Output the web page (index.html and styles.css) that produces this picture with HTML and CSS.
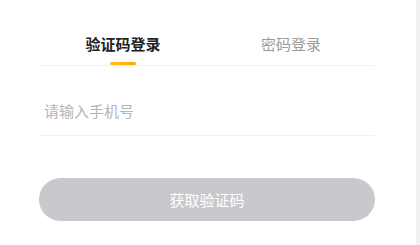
FILE: index.html
```html
<!DOCTYPE html>
<html lang="zh-CN">
<head>
<meta charset="utf-8">
<link rel="stylesheet" href="styles.css">
</head>
<body>
<div class="page">
  <main class="content">
    <div class="tabs">
      <div class="tab active"><span class="tab-label">验证码登录</span><span class="tab-bar"></span></div>
      <div class="tab"><span class="tab-label">密码登录</span><span class="tab-bar"></span></div>
    </div>
    <div class="field"><span class="placeholder">请输入手机号</span></div>
    <button class="submit" type="button">获取验证码</button>
  </main>
  <div class="scroll-strip"></div>
</div>
</body>
</html>
```

FILE: styles.css
```css
html, body {
  margin: 0;
  padding: 0;
  background: #ffffff;
}
body {
  font-family: "Noto Sans CJK SC", "Noto Sans", sans-serif;
}
.page {
  display: flex;
  width: 420px;
  height: 245px;
}
.content {
  flex: 1;
  padding-left: 39px;
  box-sizing: border-box;
}
.scroll-strip {
  width: 4px;
  background: #f1f1f1;
}
.tabs {
  width: 336px;
  display: flex;
  border-bottom: 1px solid #f1f1f1;
}
.tab {
  flex: 1;
  display: flex;
  flex-direction: column;
  align-items: center;
  padding-top: 29px;
}
.tab-label {
  font-size: 15px;
  line-height: 30px;
  color: #9a9a9a;
}
.tab-bar {
  width: 26px;
  height: 3px;
  margin-top: 3px;
  border-radius: 2px;
}
.tab.active .tab-label {
  color: #222222;
  font-weight: 700;
}
.tab.active .tab-bar {
  background: linear-gradient(90deg, #ffc21a, #ffa600);
}
.field {
  width: 336px;
  box-sizing: border-box;
  padding: 33px 0 12px 5px;
  border-bottom: 1px solid #f1f1f1;
}
.placeholder {
  display: block;
  font-size: 15px;
  line-height: 24px;
  color: #b4b6b9;
}
.submit {
  display: block;
  width: 336px;
  height: 43px;
  margin-top: 42px;
  padding: 1px 0 0;
  border: none;
  border-radius: 22px;
  background: #c8c9cc;
  color: #ffffff;
  font-family: "Noto Sans CJK SC", "Noto Sans", sans-serif;
  font-size: 15px;
  line-height: 24px;
}
```
